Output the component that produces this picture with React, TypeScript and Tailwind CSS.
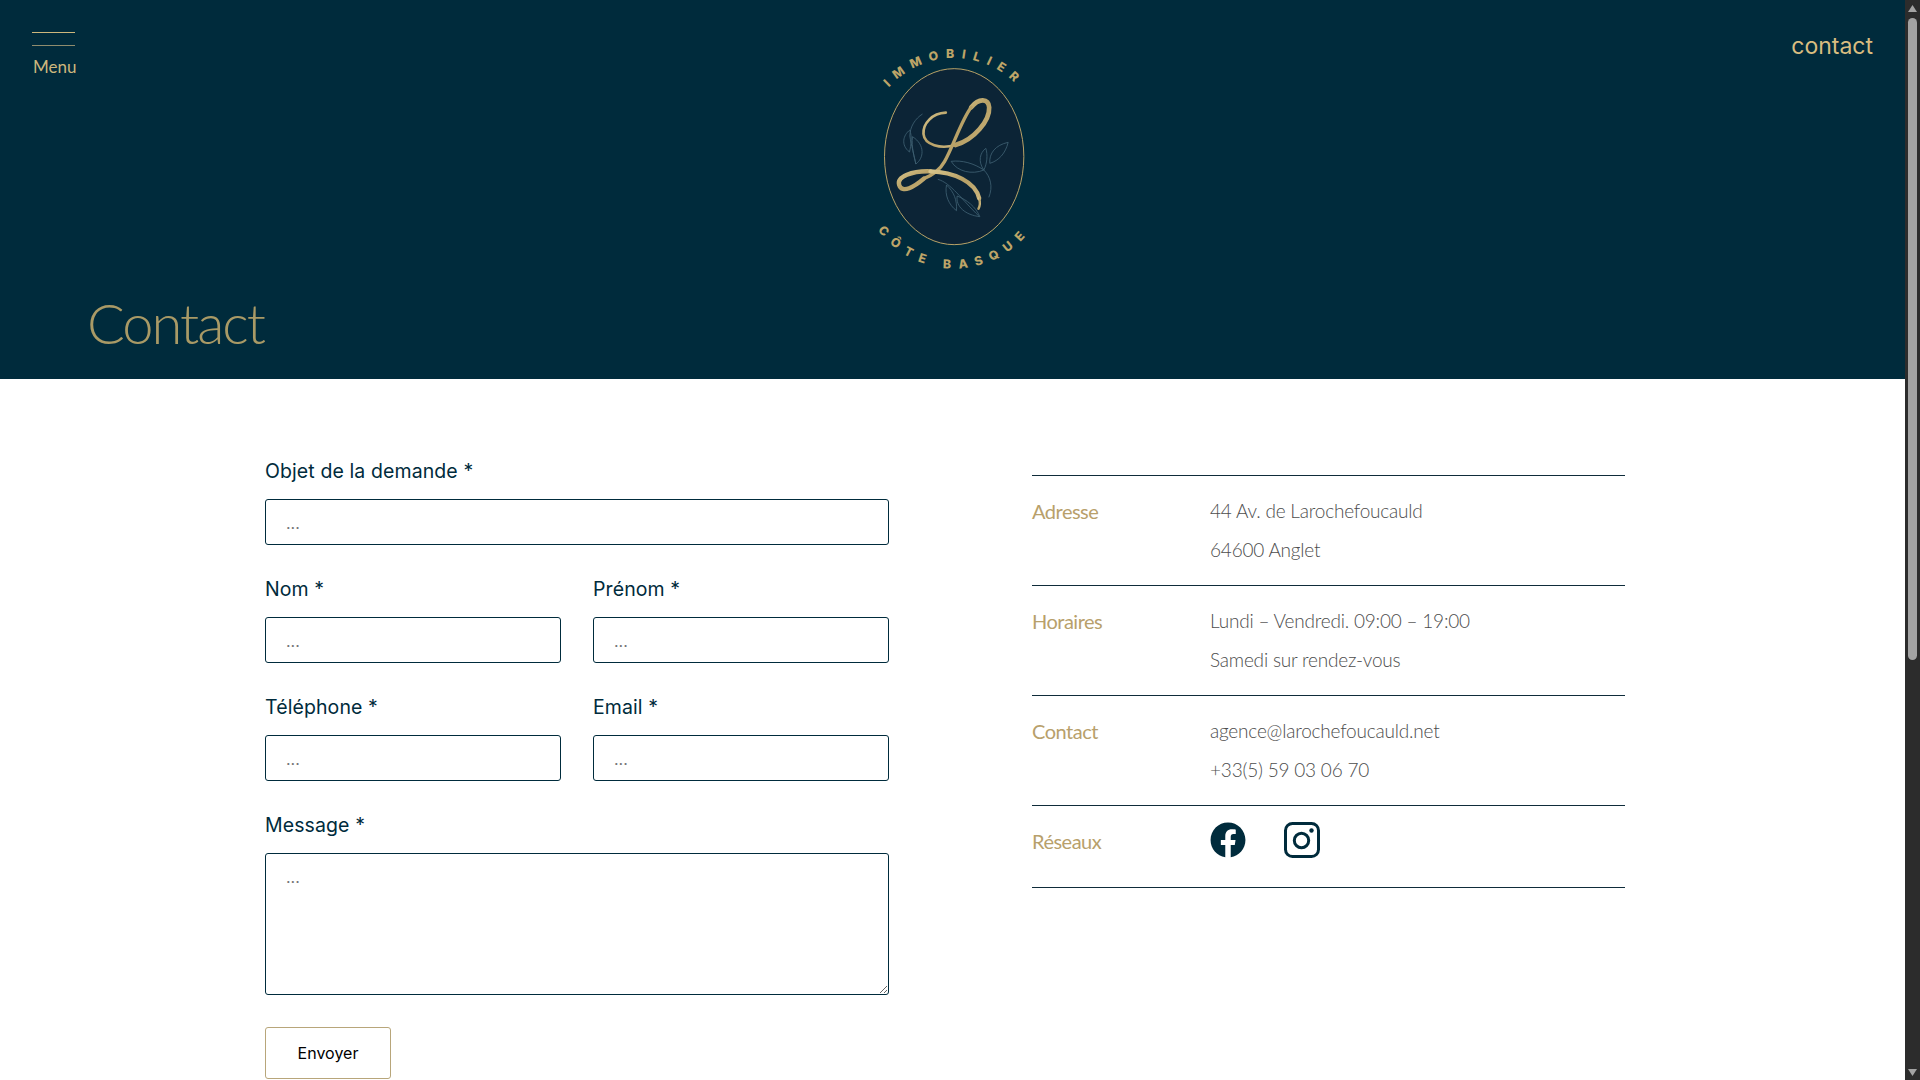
import { FaFacebook } from 'react-icons/fa'

function Logo() {
  return (
    <svg width="240" height="250" viewBox="-22.5 0 720 750" className="block">
      <defs>
        <linearGradient id="gold" x1="0" y1="0" x2="1" y2="1">
          <stop offset="0" stopColor="#d6c389" />
          <stop offset="0.5" stopColor="#b7a066" />
          <stop offset="1" stopColor="#cbb57c" />
        </linearGradient>
        <path id="arc-top" d="M77 300 A274 295 0 0 1 605 300" />
        <path id="arc-bottom" d="M48 470 A304 335 0 0 0 634 470" />
      </defs>
      <ellipse cx="341" cy="380" rx="209" ry="264" fill="#0c2436" stroke="#b8a267" strokeWidth="3" />

      {/* leaves */}
      <g fill="none" stroke="#3f6072" strokeWidth="2.5">
        <path d="M246 252 C225 265 208 290 208 318 C212 345 222 380 226 402" />
        <path d="M208 300 C188 315 180 345 207 366 C212 345 215 320 208 300Z" />
        <path d="M216 320 C212 350 222 385 226 402 C250 385 255 345 216 320Z" />
        <path d="M332 394 C365 390 400 400 430 420 C395 435 350 425 332 394Z" />
        <path d="M430 420 C450 440 458 470 445 502" />
        <path d="M430 420 C412 395 418 368 436 355 C442 375 440 400 430 420Z" />
        <path d="M448 400 C445 370 465 345 503 337 C495 370 475 392 448 400Z" />
        <path d="M292 448 C330 458 365 510 415 558" />
        <path d="M318 465 C312 495 325 525 348 542 C350 510 340 485 318 465Z" />
        <path d="M350 498 C345 530 375 555 418 560 C405 530 380 510 350 498Z" />
      </g>

      {/* script L */}
      <g fill="none" stroke="url(#gold)" strokeLinecap="round">
        <path strokeWidth="8" d="M316 248 C275 250 247 280 249 312 C252 345 300 358 345 345" />
        <path strokeWidth="14" d="M345 345 C400 330 448 272 446 232 C444 205 415 203 392 232" />
        <path strokeWidth="10" d="M392 232 C362 272 338 350 312 395 C298 420 280 434 250 446" />
        <path strokeWidth="13" d="M250 446 C222 470 185 492 176 465 C168 440 215 422 270 424" />
        <path strokeWidth="13" d="M270 424 C340 426 405 455 416 505" />
        <path strokeWidth="7" d="M416 505 C420 518 418 528 414 536" />
      </g>

      <g fill="#bda568" fontFamily="Inter, sans-serif" fontWeight="800" fontSize="37">
        <text letterSpacing="22" textAnchor="middle">
          <textPath href="#arc-top" startOffset="50%">IMMOBILIER</textPath>
        </text>
        <text letterSpacing="24" textAnchor="middle">
          <textPath href="#arc-bottom" startOffset="50%">CÔTE BASQUE</textPath>
        </text>
      </g>
    </svg>
  )
}

function InstagramIcon() {
  return (
    <svg width="36" height="36" viewBox="0 0 36 36" fill="none" stroke="#002b3c" strokeWidth="3">
      <rect x="1.5" y="1.5" width="33" height="33" rx="7" />
      <circle cx="17.5" cy="18.5" r="7.2" />
      <circle cx="27.5" cy="8.5" r="2.2" fill="#002b3c" stroke="none" />
    </svg>
  )
}

function Field({ label, className = '' }: { label: string; className?: string }) {
  return (
    <div className={className}>
      <label className="block h-[28px] mb-[14px] text-[19.5px] leading-[28px] tracking-[0.1px] text-[#002b3c] font-['Inter',sans-serif]">
        {label}
      </label>
      <input
        placeholder="..."
        className="block w-full h-[46px] px-[20px] pt-[2px] border border-[#002b3c] rounded-[3px] bg-white text-[16px] font-['Inter',sans-serif] placeholder:text-[#757575] outline-none"
      />
    </div>
  )
}

function InfoRow({ title, lines }: { title: string; lines: string[] }) {
  return (
    <div className="flex h-[110px] border-t border-[#0f2c3a] pt-[15px]">
      <div className="w-[178px] pt-[1px] text-[20px] leading-[39px] tracking-[-0.5px] text-[#b8a06b] font-['Lato',sans-serif]">
        {title}
      </div>
      <div className="text-[19px] leading-[39px] tracking-[-0.2px] font-light text-[#4d4d4d] font-['Lato',sans-serif]">
        {lines.map(line => (
          <div key={line}>{line}</div>
        ))}
      </div>
    </div>
  )
}

function Scrollbar() {
  return (
    <div className="w-[15px] h-full shrink-0 flex flex-col items-center bg-[#2c2c2c]">
      <svg width="9" height="18" viewBox="0 0 9 18" className="shrink-0">
        <path d="M4.5 5 L9 12 L0 12 Z" fill="#a3a3a3" />
      </svg>
      <div className="w-[9px] h-[642px] shrink-0 rounded-full bg-[#a3a3a3]" />
      <div className="flex-1" />
      <svg width="9" height="18" viewBox="0 0 9 18" className="shrink-0">
        <path d="M0 7 L9 7 L4.5 14 Z" fill="#a3a3a3" />
      </svg>
    </div>
  )
}

export default function App() {
  return (
    <div className="flex h-[1080px] overflow-hidden bg-white">
      <div className="flex-1 min-w-0">
        {/* Header */}
        <header className="h-[379px] bg-[#002b3c]">
          <div className="grid grid-cols-[1fr_240px_1fr] h-[280px]">
            <div className="pl-[33px] pt-[32px]">
              <div className="w-[43px] h-px -ml-px bg-[#cdb77c]" />
              <div className="w-[43px] h-px -ml-px mt-[12px] bg-[#8f8c6e]" />
              <div className="mt-[9px] text-[17px] leading-[24px] text-[#cdb77c] font-['Lato',sans-serif]">Menu</div>
            </div>
            <div className="pt-[30px]">
              <Logo />
            </div>
            <div className="pt-[31px] pr-[32px] text-right text-[23px] leading-[30px] text-[#d9bd80] font-['Inter',sans-serif]">
              contact
            </div>
          </div>
          <h1 className="pl-[87px] mt-[8px] text-[56px] leading-[70px] font-light tracking-[-2px] text-[#a99a66] font-['Lato',sans-serif]">
            Contact
          </h1>
        </header>

        {/* Main */}
        <main className="flex pl-[265px] pt-[78px]">
          <form className="w-[624px] shrink-0">
            <div className="grid grid-cols-2 gap-x-[32px] gap-y-[30px]">
              <Field label="Objet de la demande *" className="col-span-2" />
              <Field label="Nom *" />
              <Field label="Prénom *" />
              <Field label="Téléphone *" />
              <Field label="Email *" />
              <div className="col-span-2">
                <label className="block h-[28px] mb-[14px] text-[19.5px] leading-[28px] tracking-[0.1px] text-[#002b3c] font-['Inter',sans-serif]">
                  Message *
                </label>
                <textarea
                  placeholder="..."
                  className="block w-full h-[142px] px-[20px] py-[11px] border border-[#002b3c] rounded-[3px] text-[16px] font-['Inter',sans-serif] placeholder:text-[#757575] outline-none"
                />
              </div>
            </div>
            <button
              type="button"
              className="block w-[126px] h-[52px] mt-[32px] border border-[#b8a67a] rounded-[3px] text-[16px] text-black font-['Inter',sans-serif]"
            >
              Envoyer
            </button>
          </form>

          <aside className="w-[593px] ml-[143px] mt-[18px]">
            <InfoRow title="Adresse" lines={['44 Av. de Larochefoucauld', '64600 Anglet']} />
            <InfoRow title="Horaires" lines={['Lundi – Vendredi. 09:00 – 19:00', 'Samedi sur rendez-vous']} />
            <InfoRow title="Contact" lines={['agence@larochefoucauld.net', '+33(5) 59 03 06 70']} />
            <div className="flex h-[83px] border-t border-b border-[#0f2c3a] pt-[15px]">
              <div className="w-[178px] pt-[1px] text-[20px] leading-[39px] tracking-[-0.5px] text-[#b8a06b] font-['Lato',sans-serif]">
                Réseaux
              </div>
              <div className="flex gap-[38px] pt-[1px]">
                <FaFacebook className="w-[36px] h-[36px] text-[#002b3c]" />
                <InstagramIcon />
              </div>
            </div>
          </aside>
        </main>
      </div>
      <Scrollbar />
    </div>
  )
}
